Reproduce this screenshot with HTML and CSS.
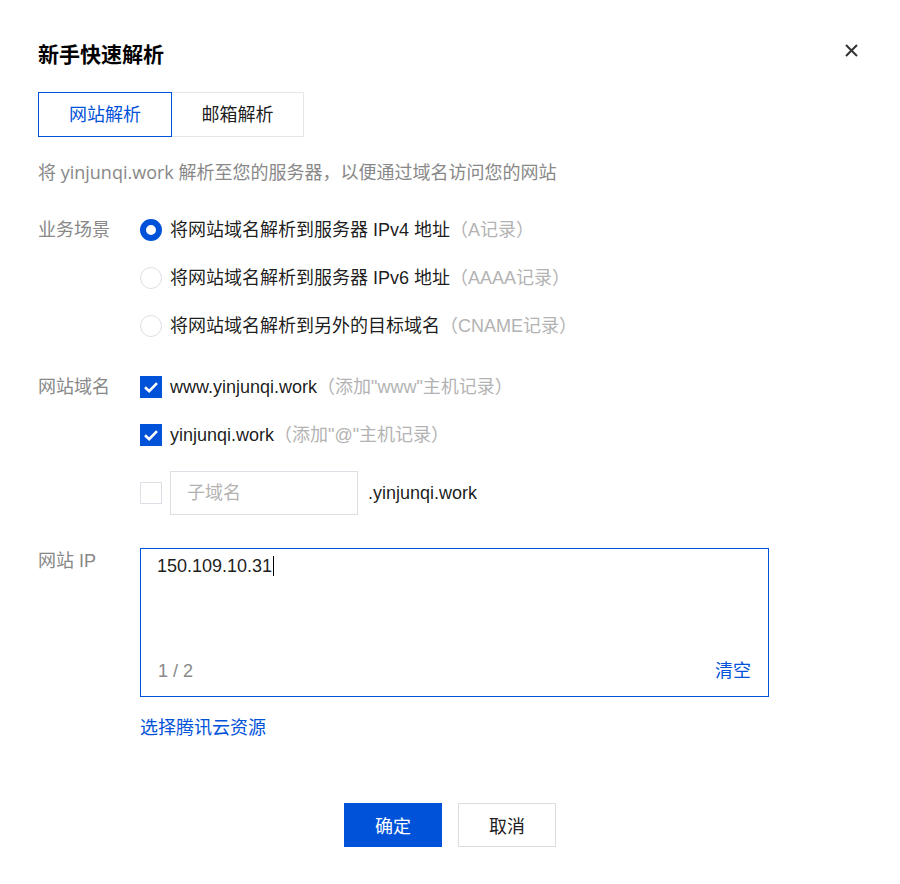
FILE: index.html
```html
<!DOCTYPE html>
<html lang="zh-CN">
<head>
<meta charset="utf-8">
<title>新手快速解析</title>
<link rel="stylesheet" href="styles.css">
</head>
<body>
<div class="dialog">
  <div class="header">
    <h1 class="title">新手快速解析</h1>
    <span class="close" aria-label="关闭">
      <svg width="13" height="13" viewBox="0 0 13 13"><path d="M1 1L12 12M12 1L1 12" stroke="#333" stroke-width="2" fill="none"/></svg>
    </span>
  </div>

  <div class="tabs">
    <div class="tab active">网站解析</div>
    <div class="tab">邮箱解析</div>
  </div>

  <p class="desc">将 yinjunqi.work 解析至您的服务器，以便通过域名访问您的网站</p>

  <div class="field field-scene">
    <div class="label">业务场景</div>
    <div class="controls">
      <div class="option"><span class="radio checked"></span><span class="opt-text">将网站域名解析到服务器 IPv4 地址</span><span class="hint">（A记录）</span></div>
      <div class="option"><span class="radio"></span><span class="opt-text">将网站域名解析到服务器 IPv6 地址</span><span class="hint">（AAAA记录）</span></div>
      <div class="option"><span class="radio"></span><span class="opt-text">将网站域名解析到另外的目标域名</span><span class="hint">（CNAME记录）</span></div>
    </div>
  </div>

  <div class="field field-domain">
    <div class="label">网站域名</div>
    <div class="controls">
      <div class="option"><span class="checkbox checked"><svg width="22" height="22" viewBox="0 0 22 22"><path d="M5 11.2L9.2 15.2L17 7.2" stroke="#fff" stroke-width="2.6" fill="none"/></svg></span><span class="opt-text">www.yinjunqi.work</span><span class="hint">（添加"www"主机记录）</span></div>
      <div class="option"><span class="checkbox checked"><svg width="22" height="22" viewBox="0 0 22 22"><path d="M5 11.2L9.2 15.2L17 7.2" stroke="#fff" stroke-width="2.6" fill="none"/></svg></span><span class="opt-text">yinjunqi.work</span><span class="hint">（添加"@"主机记录）</span></div>
      <div class="option sub-row"><span class="checkbox"></span><div class="sub-input">子域名</div><span class="opt-text suffix">.yinjunqi.work</span></div>
    </div>
  </div>

  <div class="field field-ip">
    <div class="label">网站 IP</div>
    <div class="controls">
      <div class="textarea">
        <div class="ta-value">150.109.10.31<span class="caret"></span></div>
        <div class="ta-footer"><span class="count">1 / 2</span><span class="clear">清空</span></div>
      </div>
      <div class="link">选择腾讯云资源</div>
    </div>
  </div>

  <div class="footer">
    <button class="btn primary">确定</button>
    <button class="btn">取消</button>
  </div>
</div>
</body>
</html>
```

FILE: styles.css
```css
* { box-sizing: border-box; }

body {
  margin: 0;
  background: #fff;
  font-family: "Liberation Sans", "Noto Sans CJK SC", sans-serif;
  font-size: 18px;
  color: rgba(0, 0, 0, 0.9);
}

.dialog {
  width: 900px;
  padding: 41px 40px 40px 38px;
}

.header {
  display: flex;
  justify-content: space-between;
  align-items: flex-start;
}

.title {
  margin: 0;
  font-size: 21px;
  line-height: 28px;
  font-weight: 700;
  color: #000;
}

.close {
  display: block;
  width: 13px;
  height: 13px;
  margin-top: 3px;
  margin-right: 2px;
}
.close svg { display: block; }

.tabs {
  display: flex;
  margin-top: 23px;
}

.tab {
  width: 134px;
  height: 45px;
  border: 1px solid #e3e6eb;
  display: flex;
  align-items: center;
  justify-content: center;
  line-height: 24px;
  color: rgba(0, 0, 0, 0.9);
  background: #fff;
}
.tab + .tab {
  width: 133px;
  margin-left: -1px;
}
.tab.active {
  position: relative;
  z-index: 1;
  border-color: #0052d9;
  color: #0052d9;
}

.desc {
  margin: 23px 0 0;
  line-height: 24px;
  color: #888;
  font-family: "Open Sans", "Noto Sans CJK SC", sans-serif;
}

.field {
  display: flex;
}
.field-scene { margin-top: 34px; }
.field-domain { margin-top: 37px; }
.field-ip { margin-top: 33px; }

.label {
  width: 102px;
  flex: none;
  line-height: 24px;
  color: #888;
}
.field-ip .label { margin-top: 1px; }

.controls {
  display: flex;
  flex-direction: column;
  gap: 24px;
}

.option {
  display: flex;
  align-items: center;
  height: 24px;
  line-height: 24px;
  white-space: nowrap;
}
.option.sub-row { height: 44px; }

.opt-text { color: rgba(0, 0, 0, 0.9); }
.hint { color: #b3b3b3; }

.radio {
  width: 22px;
  height: 22px;
  border-radius: 50%;
  border: 1px solid #dcdfe6;
  margin-right: 8px;
  flex: none;
  background: #fff;
}
.radio.checked {
  border: 6px solid #0052d9;
}

.checkbox {
  width: 22px;
  height: 22px;
  border: 1px solid #dcdfe6;
  margin-right: 8px;
  flex: none;
  background: #fff;
}
.checkbox svg { display: block; }
.checkbox.checked {
  border: none;
  background: #0052d9;
}

.sub-input {
  width: 188px;
  height: 44px;
  border: 1px solid #dcdfe6;
  padding: 0 16px;
  line-height: 42px;
  color: #b3b3b3;
  margin-right: 10px;
}

.textarea {
  width: 629px;
  height: 149px;
  border: 1px solid #0052d9;
  padding: 5px 17px 13px 16px;
  display: flex;
  flex-direction: column;
  justify-content: space-between;
}

.ta-value {
  line-height: 24px;
  display: flex;
  align-items: center;
}
.caret {
  display: inline-block;
  width: 1px;
  height: 20px;
  background: #000;
  margin-left: 1px;
}

.ta-footer {
  display: flex;
  justify-content: space-between;
  line-height: 24px;
}
.count {
  color: #888;
  padding-left: 1px;
}
.clear { color: #0052d9; }

.field-ip .controls { gap: 19px; }

.link {
  line-height: 24px;
  color: #0052d9;
}

.footer {
  display: flex;
  justify-content: center;
  gap: 16px;
  margin-top: 63px;
  padding-left: 2px;
}

.btn {
  width: 98px;
  height: 44px;
  border: 1px solid #dcdcdc;
  background: #fff;
  font-family: "Liberation Sans", "Noto Sans CJK SC", sans-serif;
  font-size: 18px;
  color: rgba(0, 0, 0, 0.9);
  padding: 0;
}
.btn.primary {
  background: #0052d9;
  border-color: #0052d9;
  color: #fff;
}
```
